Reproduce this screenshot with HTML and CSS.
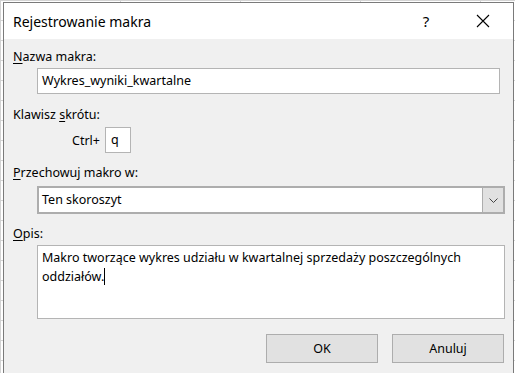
FILE: index.html
```html
<!DOCTYPE html>
<html lang="pl">
<head>
  <meta charset="UTF-8">
  <title>Rejestrowanie makra</title>
  <link rel="stylesheet" href="styles.css">
</head>
<body>
  <div class="dialog">
    <div class="titlebar">
      <span class="title">Rejestrowanie makra</span>
      <span class="help">?</span>
      <span class="close">
        <svg width="14" height="14" viewBox="0 0 14 14"><path d="M1 1 L13 13 M13 1 L1 13" stroke="#000" stroke-width="1.1" fill="none"/></svg>
      </span>
    </div>

    <div class="content">
      <div class="label"><u>N</u>azwa makra:</div>
      <div class="field name">Wykres_wyniki_kwartalne</div>

      <div class="label">Klawisz <u>s</u>krótu:</div>
      <div class="shortcut">
        <span>Ctrl+</span>
        <div class="field key">q</div>
      </div>

      <div class="label"><u>P</u>rzechowuj makro w:</div>
      <div class="select">
        <span class="select-text">Ten skoroszyt</span>
        <span class="select-btn">
          <svg width="9" height="5" viewBox="0 0 9 5"><path d="M0.5 0.5 L4.5 4.5 L8.5 0.5" stroke="#444" stroke-width="1" fill="none"/></svg>
        </span>
      </div>

      <div class="label"><u>O</u>pis:</div>
      <div class="field desc">Makro tworzące wykres udziału w kwartalnej sprzedaży poszczególnych oddziałów.<span class="caret"></span></div>

      <div class="buttons">
        <button class="btn">OK</button>
        <button class="btn">Anuluj</button>
      </div>
    </div>
  </div>
</body>
</html>
```

FILE: styles.css
```css
/* Base */
* { box-sizing: border-box; margin: 0; padding: 0; }
body {
  font-family: "Noto Sans", "Open Sans", sans-serif;
  font-size: 12.5px;
  color: #000;
  background: #fff;
  background-image:
    linear-gradient(#d4d4d4 1px, transparent 1px),
    linear-gradient(90deg, #d4d4d4 1px, transparent 1px);
  background-size: 100% 20px, 120px 100%;
  height: 373px;
  overflow: hidden;
}

/* Dialog */
.dialog {
  margin: 2px 0 0 3px;
  width: 511px;
  height: 380px;
  border: 1px solid #7a7a7a;
  background: #f0f0f0;
}
.titlebar {
  height: 36px;
  background: #fff;
  display: flex;
  align-items: center;
  padding-left: 9px;
}
.title {
  font-size: 14px;
  flex: 1;
}
.help {
  font-size: 15px;
  width: 54px;
  text-align: center;
}
.close {
  width: 60px;
  display: flex;
  justify-content: center;
}

/* Content */
.content {
  padding: 10px 8px 0 9px;
}
.label {
  line-height: 16px;
  margin-bottom: 3px;
}
.label u { text-decoration-thickness: 1px; text-underline-offset: 2px; }
.field {
  background: #fff;
  border: 1px solid #b4b4b4;
}
.name {
  margin-left: 24px;
  width: 463px;
  height: 26px;
  line-height: 24px;
  padding-left: 4px;
  margin-bottom: 13px;
}
.shortcut {
  display: flex;
  align-items: center;
  margin: 4px 0 12px 59px;
  gap: 5px;
}
.key {
  width: 26px;
  height: 26px;
  line-height: 24px;
  padding-left: 5px;
}
.select {
  margin: 5px 0 12px 24px;
  width: 468px;
  height: 28px;
  display: flex;
  background: #fff;
  border: 2px solid #adadad;
}
.select-text {
  flex: 1;
  line-height: 24px;
  padding-left: 3px;
}
.select-btn {
  width: 21px;
  background: #e1e1e1;
  border-left: 1px solid #adadad;
  display: flex;
  align-items: center;
  justify-content: center;
}
.desc {
  margin-left: 24px;
  width: 468px;
  height: 74px;
  padding: 2px 4px;
  line-height: 19px;
}
.caret {
  display: inline-block;
  width: 1px;
  height: 17px;
  background: #000;
  vertical-align: -4px;
}

/* Buttons */
.buttons {
  display: flex;
  justify-content: flex-end;
  gap: 14px;
  margin-top: 15px;
  padding-right: 1px;
}
.btn {
  width: 112px;
  height: 29px;
  font-family: inherit;
  font-size: 12.5px;
  background: #e1e1e1;
  border: 1px solid #adadad;
  color: #000;
}
```
